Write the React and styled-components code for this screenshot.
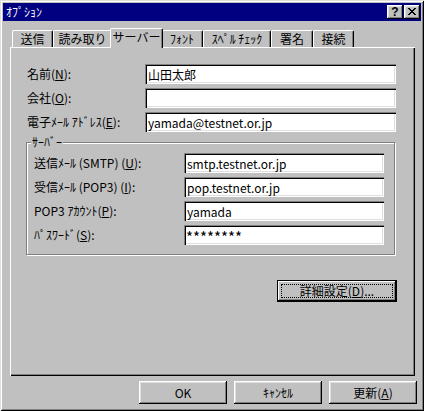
import React from "react";
import styled, { createGlobalStyle } from "styled-components";

const FONT = `"Noto Sans CJK JP", "Noto Sans", sans-serif`;

const GlobalStyle = createGlobalStyle`
  html, body { margin: 0; padding: 0; background: #c0c0c0; }
  body { font-family: ${FONT}; font-size: 12px; }
  *, *::before, *::after { box-sizing: border-box; }
`;

const Window = styled.div`
  width: 424px;
  height: 411px;
  background: #c0c0c0;
  padding: 3px;
  display: flex;
  flex-direction: column;
  box-shadow: inset 1px 1px #dfdfdf, inset -1px -1px #000, inset 2px 2px #fff,
    inset -2px -2px #808080;
  font-family: ${FONT};
  font-size: 12px;
  line-height: 14px;
  color: #000;
`;

const TitleBar = styled.div`
  height: 18px;
  flex-shrink: 0;
  background: #000080;
  color: #fff;
  display: flex;
  align-items: center;
  padding: 0 1px 0 3px;
`;

const Title = styled.span`
  flex: 1;
  white-space: nowrap;
`;

const CaptionButtons = styled.div`
  display: flex;
  gap: 1px;
`;

const CaptionButton = styled.div`
  width: 16px;
  height: 14px;
  background: #c0c0c0;
  box-shadow: inset -1px -1px #000, inset 1px 1px #fff, inset -2px -2px #808080,
    inset 2px 2px #dfdfdf;
  display: flex;
  align-items: center;
  justify-content: center;
  color: #000;
  font: bold 12px/1 "Liberation Sans", sans-serif;
  padding-bottom: 1px;
`;

const Body = styled.div`
  flex: 1;
  display: flex;
  flex-direction: column;
  padding: 7px 4px 0 7px;
`;

const TabRow = styled.div`
  height: 20px;
  display: flex;
  align-items: flex-end;
  padding-left: 2px;
  position: relative;
  z-index: 1;
  margin-bottom: -1px;
`;

const Tab = styled.div`
  width: ${(p) => p.$w + (p.$active ? 4 : 0)}px;
  height: ${(p) => (p.$active ? 20 : 17)}px;
  margin: ${(p) => (p.$active ? "0 -2px" : "0 0 1px")};
  background: #c0c0c0;
  border-top: 1px solid #fff;
  border-left: 1px solid #fff;
  border-right: 1px solid #000;
  border-radius: 2px 2px 0 0;
  box-shadow: inset -1px 0 #808080;
  display: flex;
  align-items: center;
  justify-content: center;
  white-space: nowrap;
  position: relative;
  z-index: ${(p) => (p.$active ? 2 : 1)};
  padding-bottom: ${(p) => (p.$active ? 3 : 0)}px;
`;

const Panel = styled.div`
  width: 405px;
  height: 329px;
  flex-shrink: 0;
  background: #c0c0c0;
  box-shadow: inset 1px 1px #fff, inset -1px -1px #000, inset -2px -2px #808080;
  padding: 17px 19px 0 16px;
  display: flex;
  flex-direction: column;
`;

const Fields = styled.div`
  display: flex;
  flex-direction: column;
  gap: 4px;
  margin-left: ${(p) => p.$indent || 0}px;
`;

const Row = styled.div`
  display: flex;
  align-items: center;
  height: 20px;
`;

const Label = styled.label`
  width: ${(p) => p.$w}px;
  flex-shrink: 0;
  white-space: nowrap;
`;

const TextField = styled.input`
  width: ${(p) => p.$w}px;
  height: 20px;
  border: none;
  margin: 0;
  padding: ${(p) => (p.$size ? "3px 2px 0" : "0 3px")};
  background: #fff;
  box-shadow: inset 1px 1px #808080, inset 2px 2px #000, inset -1px -1px #fff,
    inset -2px -2px #dfdfdf;
  font-family: ${FONT};
  font-size: ${(p) => p.$size || 12}px;
  letter-spacing: ${(p) => p.$spacing || 0}px;
  color: #000;
  outline: none;
`;

const Group = styled.fieldset`
  margin: 3px 1px 0 0;
  padding: 4px 10px 9px 7px;
  border: 1px solid #808080;
  box-shadow: inset 1px 1px #fff, 1px 1px #fff;
  min-width: 0;
`;

const Legend = styled.legend`
  padding: 0 1px;
  margin-left: -3px;
  background: #c0c0c0;
  line-height: 14px;
`;

const RightRow = styled.div`
  display: flex;
  justify-content: flex-end;
  gap: 7px;
  margin-top: ${(p) => p.$top}px;
  margin-right: ${(p) => p.$right || 0}px;
`;

const Button = styled.div`
  width: ${(p) => p.$w}px;
  height: ${(p) => p.$h}px;
  background: #c0c0c0;
  display: flex;
  align-items: center;
  justify-content: center;
  white-space: nowrap;
  box-shadow: inset -1px -1px #000, inset 1px 1px #fff, inset -2px -2px #808080,
    inset 2px 2px #dfdfdf;
  ${(p) =>
    p.$default &&
    `
    border: 1px solid #000;
    box-shadow: inset -1px -1px #000, inset 1px 1px #fff, inset -2px -2px #808080;
    padding: 3px;
  `}
`;

const Focus = styled.span`
  flex: 1;
  align-self: stretch;
  border: 1px dotted #000;
  display: flex;
  align-items: center;
  justify-content: center;
`;

const CloseGlyph = () => (
  <svg width="8" height="7" viewBox="0 0 8 7" shapeRendering="crispEdges">
    <g fill="#000">
      <rect x="0" y="0" width="2" height="1" />
      <rect x="6" y="0" width="2" height="1" />
      <rect x="1" y="1" width="2" height="1" />
      <rect x="5" y="1" width="2" height="1" />
      <rect x="2" y="2" width="4" height="1" />
      <rect x="3" y="3" width="2" height="1" />
      <rect x="2" y="4" width="4" height="1" />
      <rect x="1" y="5" width="2" height="1" />
      <rect x="5" y="5" width="2" height="1" />
      <rect x="0" y="6" width="2" height="1" />
      <rect x="6" y="6" width="2" height="1" />
    </g>
  </svg>
);

const tabs = [
  { label: "送信", w: 41 },
  { label: "読み取り", w: 59 },
  { label: "サーバー", w: 49, active: true },
  { label: "ﾌｫﾝﾄ", w: 42 },
  { label: "ｽﾍﾟﾙ ﾁｪｯｸ", w: 68 },
  { label: "署名", w: 42 },
  { label: "接続", w: 41 },
];

const Acc = ({ text, k, after = "" }) => (
  <>
    {text}(<u>{k}</u>){after}
  </>
);

export default function App() {
  return (
    <>
      <GlobalStyle />
      <Window>
        <TitleBar>
          <Title>ｵﾌﾟｼｮﾝ</Title>
          <CaptionButtons>
            <CaptionButton>?</CaptionButton>
            <CaptionButton>
              <CloseGlyph />
            </CaptionButton>
          </CaptionButtons>
        </TitleBar>
        <Body>
          <TabRow>
            {tabs.map((t) => (
              <Tab key={t.label} $w={t.w} $active={t.active}>
                {t.label}
              </Tab>
            ))}
          </TabRow>
          <Panel>
            <Fields $indent={1}>
              <Row>
                <Label $w={118}>
                  <Acc text="名前" k="N" after=":" />
                </Label>
                <TextField $w={251} readOnly value="山田太郎" />
              </Row>
              <Row>
                <Label $w={118}>
                  <Acc text="会社" k="O" after=":" />
                </Label>
                <TextField $w={251} readOnly value="" />
              </Row>
              <Row>
                <Label $w={118}>
                  <Acc text="電子ﾒｰﾙ ｱﾄﾞﾚｽ" k="E" after=":" />
                </Label>
                <TextField $w={251} readOnly value="yamada@testnet.or.jp" />
              </Row>
            </Fields>
            <Group>
              <Legend>ｻｰﾊﾞｰ</Legend>
              <Fields>
                <Row>
                  <Label $w={150}>
                    <Acc text="送信ﾒｰﾙ (SMTP) " k="U" after=":" />
                  </Label>
                  <TextField $w={200} readOnly value="smtp.testnet.or.jp" />
                </Row>
                <Row>
                  <Label $w={150}>
                    <Acc text="受信ﾒｰﾙ (POP3) " k="I" after=":" />
                  </Label>
                  <TextField $w={200} readOnly value="pop.testnet.or.jp" />
                </Row>
                <Row>
                  <Label $w={150}>
                    <Acc text="POP3 ｱｶｳﾝﾄ" k="P" after=":" />
                  </Label>
                  <TextField $w={200} readOnly value="yamada" />
                </Row>
                <Row>
                  <Label $w={150}>
                    <Acc text="ﾊﾟｽﾜｰﾄﾞ" k="S" after=":" />
                  </Label>
                  <TextField $w={200} $size={15} $spacing={0} readOnly value="********" />
                </Row>
              </Fields>
            </Group>
            <RightRow $top={25} $right={-1}>
              <Button $w={120} $h={22} $default>
                <Focus>
                  <Acc text="詳細設定" k="D" after="..." />
                </Focus>
              </Button>
            </RightRow>
          </Panel>
          <RightRow $top={5}>
            <Button $w={88} $h={23}>OK</Button>
            <Button $w={88} $h={23}>ｷｬﾝｾﾙ</Button>
            <Button $w={88} $h={23}>
              <Acc text="更新" k="A" />
            </Button>
          </RightRow>
        </Body>
      </Window>
    </>
  );
}
